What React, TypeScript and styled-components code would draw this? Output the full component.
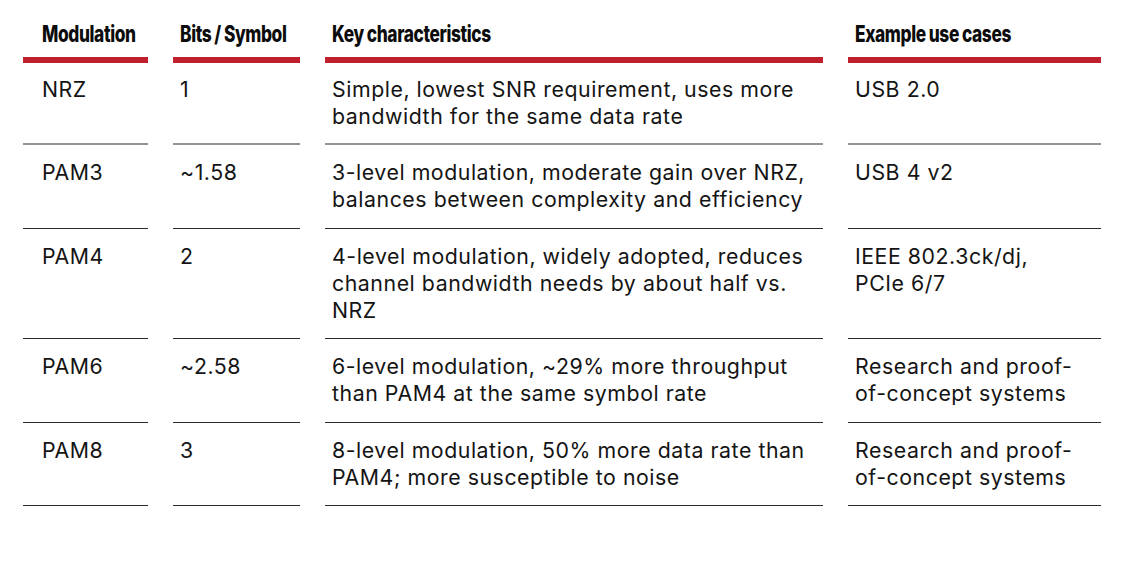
import React from "react";
import styled, { createGlobalStyle } from "styled-components";

const Global = createGlobalStyle`
  html, body { margin: 0; padding: 0; background: #ffffff; }
  body { font-family: Inter, "Liberation Sans", Arial, sans-serif; color: #141414; }
`;

const Page = styled.div`
  padding: 22px 0 0 23px;
`;

const Table = styled.div`
  display: grid;
  grid-template-columns: 125px 127px 498px 253px;
  column-gap: 25px;
  width: max-content;
`;

const HeadCell = styled.div<{ $indent: number }>`
  padding: 0 0 9px ${(p) => p.$indent}px;
  border-bottom: 6px solid #c0202e;
  white-space: nowrap;
  line-height: 24px;
`;

const HeadText = styled.span`
  display: inline-block;
  font-family: Inter, "Liberation Sans", sans-serif;
  font-weight: 800;
  font-size: 22.5px;
  line-height: 24px;
  letter-spacing: -0.5px;
  word-spacing: -0.5px;
  color: #0c0c0c;
  transform: scaleX(0.77);
  transform-origin: left center;
`;

const Cell = styled.div<{ $indent: number; $first: boolean }>`
  font-family: Inter, "Liberation Sans", sans-serif;
  font-size: 21.3px;
  line-height: 27px;
  letter-spacing: 0.55px;
  color: #141414;
  padding: ${(p) => (p.$first ? "13px 0 13px" : "14px 0 14.5px")} ${(p) => p.$indent}px;
  border-bottom: ${(p) => (p.$first ? "2px solid #959595" : "1px solid #2a2a2a")};
`;

const headers = ["Modulation", "Bits / Symbol", "Key characteristics", "Example use cases"];
const indents = [19, 7, 7, 7];

const rows: string[][][] = [
  [["NRZ"], ["1"], ["Simple, lowest SNR requirement, uses more", "bandwidth for the same data rate"], ["USB 2.0"]],
  [["PAM3"], ["~1.58"], ["3-level modulation, moderate gain over NRZ,", "balances between complexity and efficiency"], ["USB 4 v2"]],
  [["PAM4"], ["2"], ["4-level modulation, widely adopted, reduces", "channel bandwidth needs by about half vs.", "NRZ"], ["IEEE 802.3ck/dj,", "PCIe 6/7"]],
  [["PAM6"], ["~2.58"], ["6-level modulation, ~29% more throughput", "than PAM4 at the same symbol rate"], ["Research and proof-", "of-concept systems"]],
  [["PAM8"], ["3"], ["8-level modulation, 50% more data rate than", "PAM4; more susceptible to noise"], ["Research and proof-", "of-concept systems"]],
];

export default function App() {
  return (
    <Page>
      <Global />
      <Table>
        {headers.map((h, i) => (
          <HeadCell key={h} $indent={indents[i]}>
            <HeadText>{h}</HeadText>
          </HeadCell>
        ))}
        {rows.map((row, r) =>
          row.map((lines, c) => (
            <Cell key={`${r}-${c}`} $indent={indents[c]} $first={r === 0}>
              {lines.map((l, k) => (
                <React.Fragment key={k}>
                  {k > 0 && <br />}
                  {l}
                </React.Fragment>
              ))}
            </Cell>
          ))
        )}
      </Table>
    </Page>
  );
}
